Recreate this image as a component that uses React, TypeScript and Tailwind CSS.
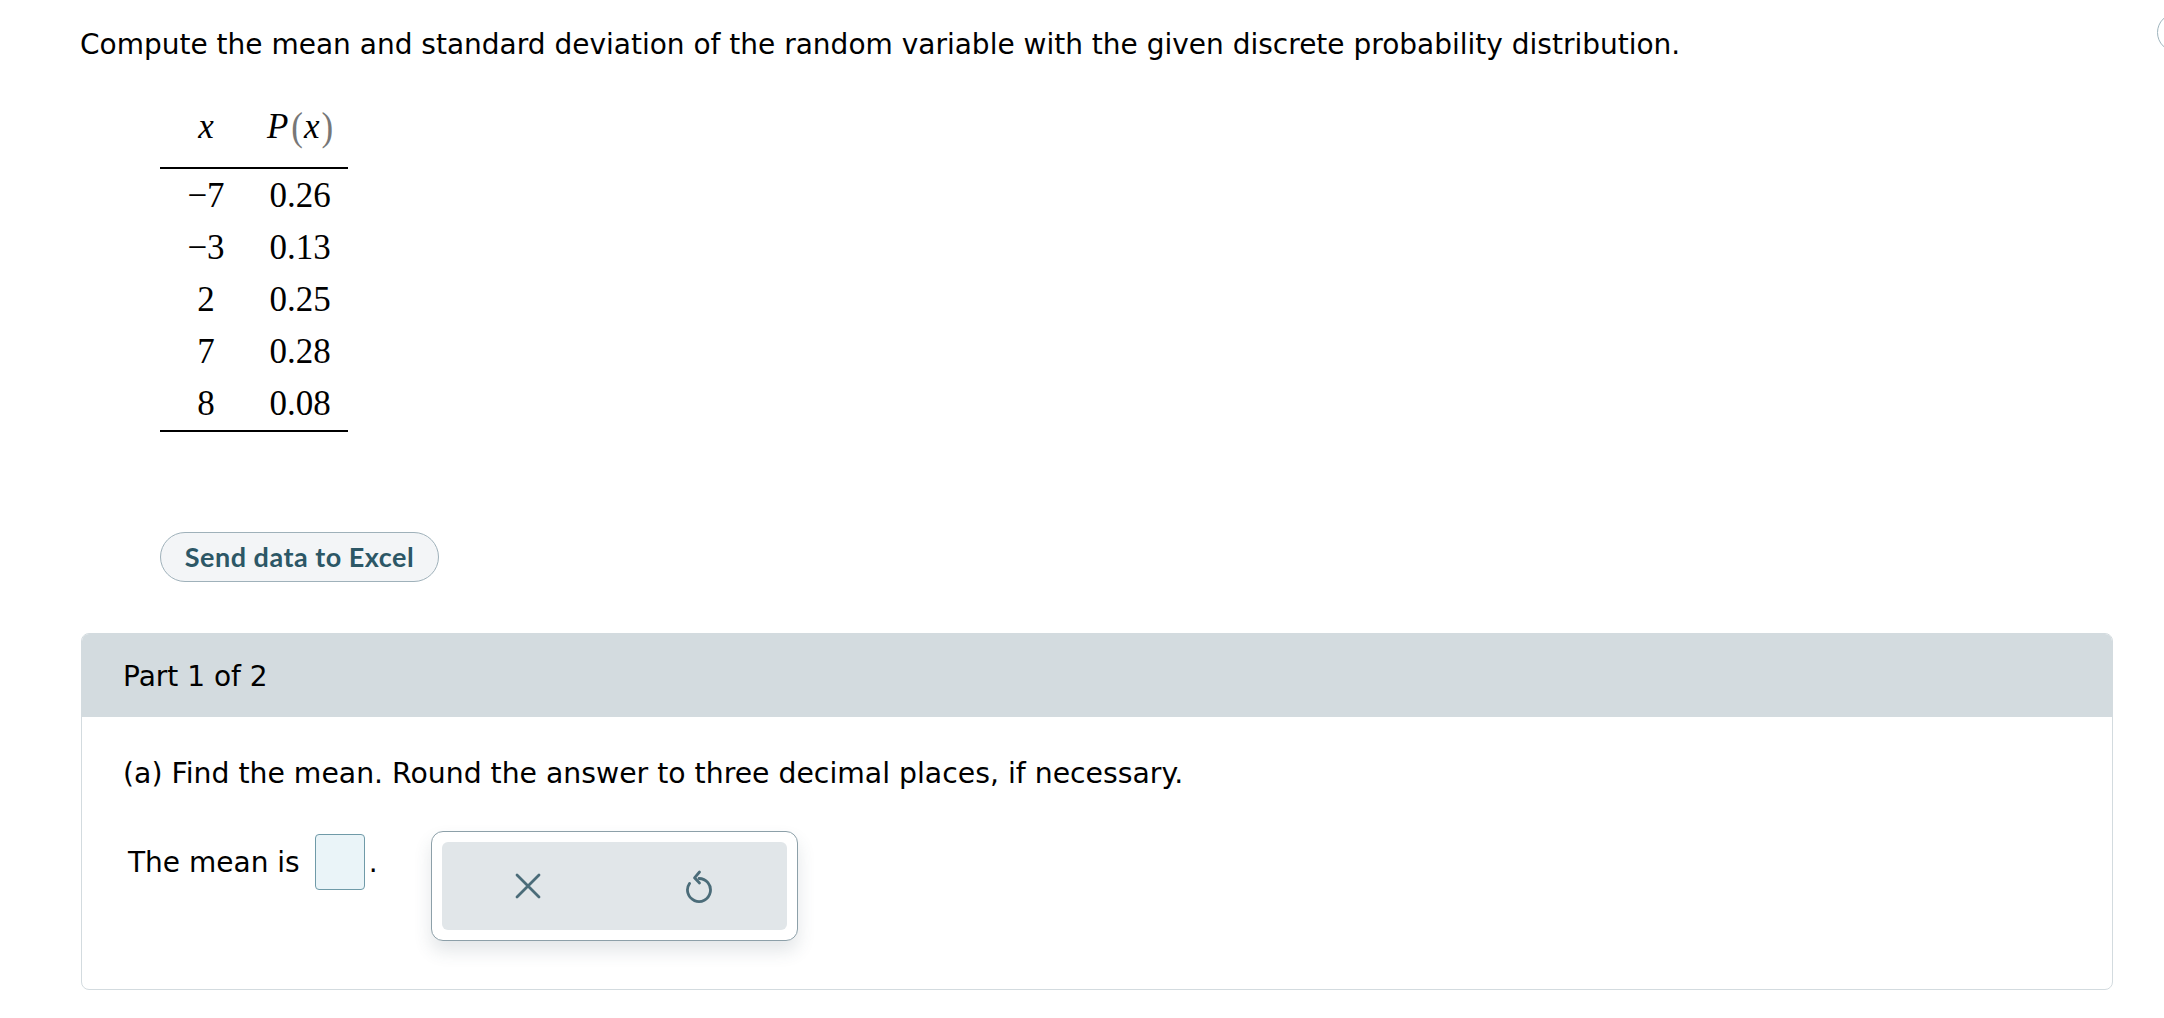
const rows = [
  { x: "\u22127", p: "0.26" },
  { x: "\u22123", p: "0.13" },
  { x: "2", p: "0.25" },
  { x: "7", p: "0.28" },
  { x: "8", p: "0.08" },
];

function CloseIcon() {
  return (
    <svg width="26" height="26" viewBox="0 0 26 26" fill="none">
      <path
        d="M2 2L24 24M24 2L2 24"
        stroke="#4b6c79"
        strokeWidth="2.8"
        strokeLinecap="round"
      />
    </svg>
  );
}

function ResetIcon() {
  return (
    <svg width="28" height="34" viewBox="0 0 28 34" fill="none">
      <path
        d="M13 9.5A11.5 11.5 0 1 1 3.5 14.5"
        stroke="#4b6c79"
        strokeWidth="2.8"
        strokeLinecap="round"
      />
      <path
        d="M13.5 3L8.5 8.8L13.5 14"
        stroke="#4b6c79"
        strokeWidth="2.8"
        strokeLinecap="round"
        strokeLinejoin="round"
      />
    </svg>
  );
}

export default function App() {
  return (
    <div className="relative min-h-screen bg-white pl-[80px] pr-[51px] text-black font-['DejaVu_Sans',Verdana,sans-serif]">
      {/* floating help button, cut off at the edge */}
      <div className="absolute left-[2157px] top-[13px] h-[39px] w-[39px] rounded-full border-[1.5px] border-[#9fb4bd] bg-white" />

      <p className="pt-[28px] text-[28px] leading-[33px]">
        Compute the mean and standard deviation of the random variable with the
        given discrete probability distribution.
      </p>

      {/* distribution table */}
      <table className="ml-[80px] mt-[46px] border-collapse text-[35px] font-['Liberation_Serif','Times_New_Roman',serif]">
        <thead>
          <tr className="border-b-2 border-black">
            <th className="w-[92px] pb-[20px] text-center font-normal italic leading-[40px]">
              x
            </th>
            <th className="w-[96px] whitespace-nowrap pb-[20px] text-center font-normal leading-[40px]">
              <i>P</i>
              <span className="ml-[3px] mr-[1px] inline-block scale-y-[1.15] text-[#777]">(</span>
              <i>x</i>
              <span className="ml-[2px] inline-block scale-y-[1.15] text-[#777]">)</span>
            </th>
          </tr>
        </thead>
        <tbody className="border-b-2 border-black">
          {rows.map((r, i) => (
            <tr key={i}>
              <td className={`text-center leading-[52px] ${i === 0 ? "pt-[1px]" : ""}`}>{r.x}</td>
              <td className={`text-center leading-[52px] ${i === 0 ? "pt-[1px]" : ""}`}>{r.p}</td>
            </tr>
          ))}
        </tbody>
      </table>

      <button className="ml-[80px] mt-[100px] flex h-[50px] w-[279px] items-center justify-center rounded-full border-[1.5px] border-[#9fb1ba] bg-[#f3f5f7] text-[27px] font-bold tracking-[0.5px] text-[#2c5766] font-['Lato',sans-serif]">
        Send data to Excel
      </button>

      {/* part card */}
      <div className="ml-[1px] mt-[51px] overflow-hidden rounded-[8px] border-[1.5px] border-[#d3dbdf]">
        <div className="h-[83px] bg-[#d3dbdf] pl-[41px] pt-[26px] text-[28px] leading-[33px]">
          Part 1 of 2
        </div>
        <div className="h-[272px] pl-[41px] pt-[40px]">
          <p className="text-[28.3px] leading-[33px]">
            (a) Find the mean. Round the answer to three decimal places, if
            necessary.
          </p>
          <div className="mt-[41px] flex items-start">
            <div className="ml-[5px] mt-[3px] flex h-[56px] items-center text-[28px] leading-[33px]">
              <span>The mean is</span>
              <span className="ml-[15px] h-[56px] w-[50px] rounded-[4px] border-[1.5px] border-[#6f9aa8] bg-[#eaf4f8]" />
              <span className="ml-[4px]">.</span>
            </div>
            <div className="ml-[53px] h-[110px] w-[367px] rounded-[12px] border-[1.5px] border-[#8da0a9] bg-white p-[10px] shadow-[0_10px_18px_rgba(60,80,90,0.14)]">
              <div className="grid h-full grid-cols-2 items-center rounded-[6px] bg-[#e1e6e9]">
                <div className="flex justify-center">
                  <CloseIcon />
                </div>
                <div className="flex justify-center">
                  <ResetIcon />
                </div>
              </div>
            </div>
          </div>
        </div>
      </div>
    </div>
  );
}
